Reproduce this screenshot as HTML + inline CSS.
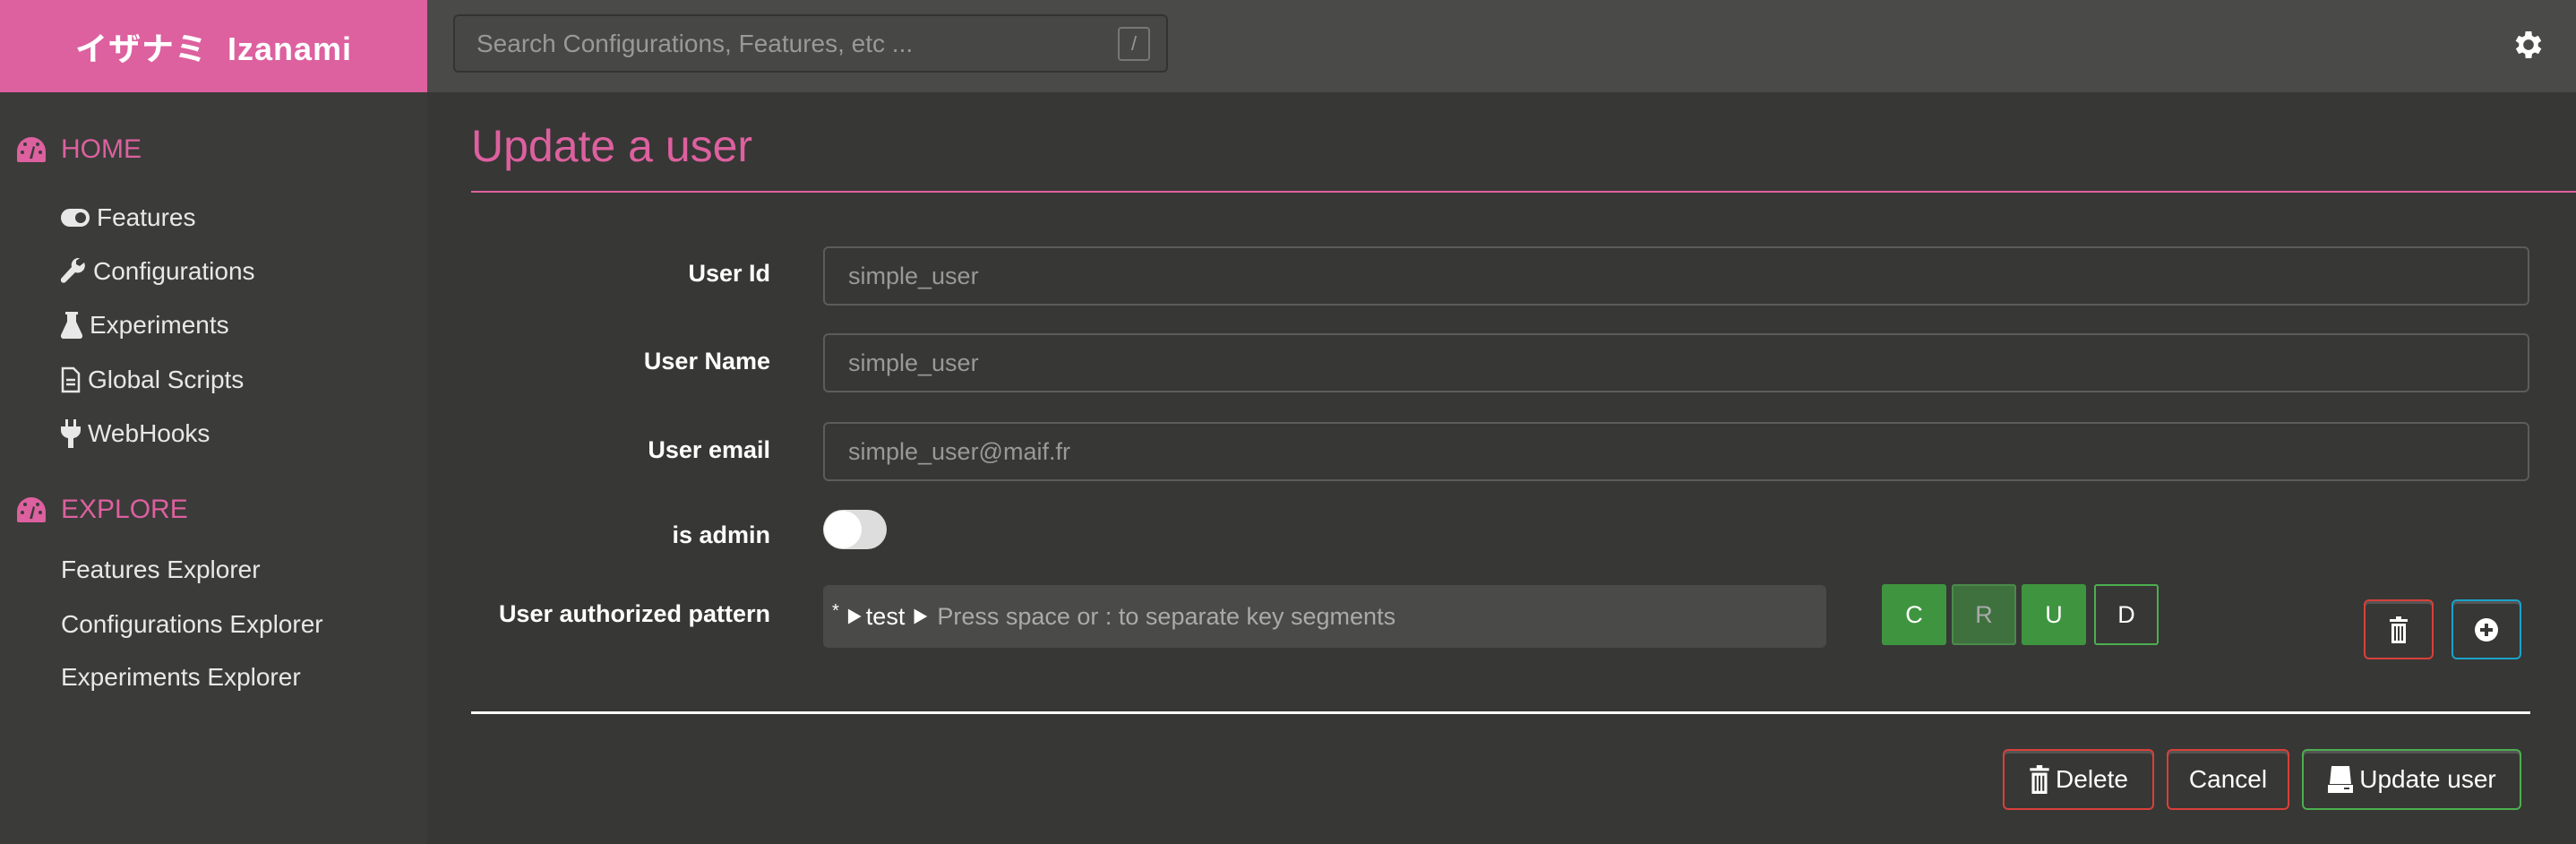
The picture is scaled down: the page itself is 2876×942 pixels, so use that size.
<!DOCTYPE html>
<html><head><meta charset="utf-8"><style>
*{box-sizing:border-box;margin:0;padding:0}
body{width:2876px;height:942px;background:#373735;font-family:"Liberation Sans","Noto Sans CJK JP",sans-serif;position:relative;overflow:hidden;color:#eee}
.a{position:absolute}
.hdr{left:0;top:0;width:2876px;height:103px;background:#4a4a48}
.logo{left:0;top:0;width:477px;height:103px;background:#dd609f;color:#fff;font-size:36px;font-weight:bold;display:flex;align-items:center;justify-content:center;letter-spacing:1px}
.search{left:506px;top:16px;width:798px;height:65px;border:2px solid #333;border-radius:6px;background:#474745;color:#999;font-size:28px;padding-left:24px;display:flex;align-items:center}
.slash{position:absolute;right:18px;top:12px;width:36px;height:38px;border:2px solid #777;border-radius:4px;color:#999;font-size:22px;text-align:center;line-height:34px}
.side{left:0;top:103px;width:477px;height:839px;background:#3b3b39}
.sec{color:#dd609f;font-size:30px;display:flex;align-items:center;left:18px}
.it{font-size:28px;color:#e8e8e8;display:flex;align-items:center;left:68px;height:40px}
.it svg{margin-right:8px}
.title{left:526px;top:134px;color:#dd609f;font-size:50px}
.lbl{right:2016px;font-size:27px;font-weight:bold;color:#fff;text-align:right;white-space:nowrap}
.inp{left:919px;width:1905px;height:66px;border:2px solid #5c5c5a;border-radius:6px;color:#999;font-size:27px;padding-left:26px;display:flex;align-items:center}
.btn{border:2px solid;border-radius:6px;display:flex;align-items:center;justify-content:center;color:#fff;font-size:28px;background:#373735;box-shadow:inset 0 3px 0 #555}
.crud{top:652px;height:68px;width:72px;display:flex;align-items:center;justify-content:center;color:#fff;font-size:27px;border-radius:3px}
</style></head><body>
<div class="a hdr"></div>
<div class="a logo">イザナミ&nbsp; Izanami</div>
<div class="a search">Search Configurations, Features, etc ...<div class="slash">/</div></div>
<svg class="a" style="left:2803px;top:30px" width="40" height="40" viewBox="0 0 24 24"><path fill="#fff" d="M19.4 13a7.5 7.5 0 000-2l2.1-1.6-2-3.5-2.5 1a7 7 0 00-1.7-1L15 3h-4l-.4 2.9a7 7 0 00-1.7 1l-2.5-1-2 3.5L6.6 11a7.5 7.5 0 000 2l-2.1 1.6 2 3.5 2.5-1a7 7 0 001.7 1L11 21h4l.4-2.9a7 7 0 001.7-1l2.5 1 2-3.5zM13 15.5a3.5 3.5 0 110-7 3.5 3.5 0 010 7z" transform="translate(-1 0)"/></svg>
<div class="a side"></div>
<div class="a sec" style="top:147px;height:40px"><svg width="34" height="30" viewBox="0 0 34 30" style="margin-right:16px"><path fill="#dd609f" d="M17 1A16 16 0 001 17v10a2 2 0 002 2h28a2 2 0 002-2V17A16 16 0 0017 1z"/><circle cx="7" cy="18" r="2" fill="#3b3b39"/><circle cx="27" cy="18" r="2" fill="#3b3b39"/><circle cx="10" cy="9" r="2" fill="#3b3b39"/><circle cx="24" cy="9" r="2" fill="#3b3b39"/><path d="M15 25l4-14 2 1-3 13z" fill="#3b3b39"/></svg>HOME</div>
<div class="a it" style="top:223px"><svg width="32" height="20" viewBox="0 0 32 20"><rect x="0" y="0" width="32" height="20" rx="10" fill="#e8e8e8"/><circle cx="22" cy="10" r="6" fill="#3b3b39"/></svg>Features</div>
<div class="a it" style="top:283px"><svg width="28" height="30" viewBox="0 0 28 30"><path fill="#e8e8e8" d="M26 5l-5 4-4-2 0-4 4-3a8 8 0 00-9 10L1 22a3 3 0 004 5l11-11a8 8 0 0010-11z"/></svg>Configurations</div>
<div class="a it" style="top:343px"><svg width="24" height="30" viewBox="0 0 24 30"><path fill="#e8e8e8" d="M5 0h14v3h-2v8l7 15a3 3 0 01-3 4H3a3 3 0 01-3-4l7-15V3H5z"/></svg>Experiments</div>
<div class="a it" style="top:404px"><svg width="22" height="30" viewBox="0 0 22 30"><path fill="none" stroke="#e8e8e8" stroke-width="2.5" d="M2 2h12l6 6v20H2z M6 15h10M6 20h10"/></svg>Global Scripts</div>
<div class="a it" style="top:464px"><svg width="22" height="32" viewBox="0 0 22 32"><path fill="#e8e8e8" d="M5 0h3v8h6V0h3v8h5v4a9 9 0 01-8 9v11h-6V21A9 9 0 010 12V8h5z"/></svg>WebHooks</div>
<div class="a sec" style="top:549px;height:40px"><svg width="34" height="30" viewBox="0 0 34 30" style="margin-right:16px"><path fill="#dd609f" d="M17 1A16 16 0 001 17v10a2 2 0 002 2h28a2 2 0 002-2V17A16 16 0 0017 1z"/><circle cx="7" cy="18" r="2" fill="#3b3b39"/><circle cx="27" cy="18" r="2" fill="#3b3b39"/><circle cx="10" cy="9" r="2" fill="#3b3b39"/><circle cx="24" cy="9" r="2" fill="#3b3b39"/><path d="M15 25l4-14 2 1-3 13z" fill="#3b3b39"/></svg>EXPLORE</div>
<div class="a it" style="top:616px">Features Explorer</div>
<div class="a it" style="top:677px">Configurations Explorer</div>
<div class="a it" style="top:736px">Experiments Explorer</div>

<div class="a title">Update a user</div>
<div class="a" style="left:526px;top:213px;width:2350px;height:2px;background:#dd609f"></div>

<div class="a lbl" style="top:290px">User Id</div>
<div class="a inp" style="top:275px">simple_user</div>
<div class="a lbl" style="top:388px">User Name</div>
<div class="a inp" style="top:372px">simple_user</div>
<div class="a lbl" style="top:487px">User email</div>
<div class="a inp" style="top:471px">simple_user@maif.fr</div>
<div class="a lbl" style="top:582px">is admin</div>
<div class="a" style="left:919px;top:569px;width:71px;height:44px;border-radius:22px;background:#ddd"><div style="position:absolute;left:1px;top:1px;width:42px;height:42px;border-radius:21px;background:#fff"></div></div>
<div class="a lbl" style="top:670px">User authorized pattern</div>
<div class="a" style="left:919px;top:653px;width:1120px;height:70px;background:#4a4a48;border-radius:6px;display:flex;align-items:center;padding-left:10px;font-size:27px">
<span style="color:#fff;font-size:20px;margin-top:-12px">*</span><span style="color:#fff;font-size:18px;margin:0 4px 0 8px">▶</span><span style="color:#fff">test</span><span style="color:#fff;font-size:18px;margin:0 10px 0 8px">▶</span><span style="color:#aaa">Press space or : to separate key segments</span></div>
<div class="a crud" style="left:2101px;background:#3f953f">C</div>
<div class="a crud" style="left:2179px;background:#3e713e;color:#aaa;border:2px solid #4a8a4a">R</div>
<div class="a crud" style="left:2257px;background:#3f953f">U</div>
<div class="a crud" style="left:2338px;background:#373735;border:2px solid #4caf50">D</div>
<div class="a btn" style="left:2639px;top:669px;width:78px;height:67px;border-color:#d9403a"><svg width="22" height="30" viewBox="0 0 22 30"><path fill="#fff" d="M8 0h6v3h7v3H1V3h7zM3 8h16v22H3zM6 11v16h2V11zm4 0v16h2V11zm4 0v16h2V11z"/></svg></div>
<div class="a btn" style="left:2737px;top:669px;width:78px;height:67px;border-color:#1aa3c8"><svg width="28" height="28" viewBox="0 0 28 28"><circle cx="14" cy="14" r="13" fill="#fff"/><path d="M12 7h4v5h5v4h-5v5h-4v-5H7v-4h5z" fill="#373735"/></svg></div>
<div class="a" style="left:526px;top:794px;width:2299px;height:3px;background:#fff"></div>
<div class="a btn" style="left:2236px;top:836px;width:169px;height:68px;border-color:#d9403a"><svg width="24" height="32" viewBox="0 0 22 30" style="margin-right:6px"><path fill="#fff" d="M8 0h6v3h7v3H1V3h7zM3 8h16v22H3zM6 11v16h2V11zm4 0v16h2V11zm4 0v16h2V11z"/></svg>Delete</div>
<div class="a btn" style="left:2419px;top:836px;width:137px;height:68px;border-color:#d9403a">Cancel</div>
<div class="a btn" style="left:2570px;top:836px;width:245px;height:68px;border-color:#4caf50"><svg width="30" height="30" viewBox="0 0 30 30" style="margin-right:6px"><path fill="#fff" d="M5 0h20l2 20H3zM1 21h28v9H1z"/><rect x="19" y="24" width="6" height="2" fill="#373735"/></svg>Update user</div>
</body></html>
